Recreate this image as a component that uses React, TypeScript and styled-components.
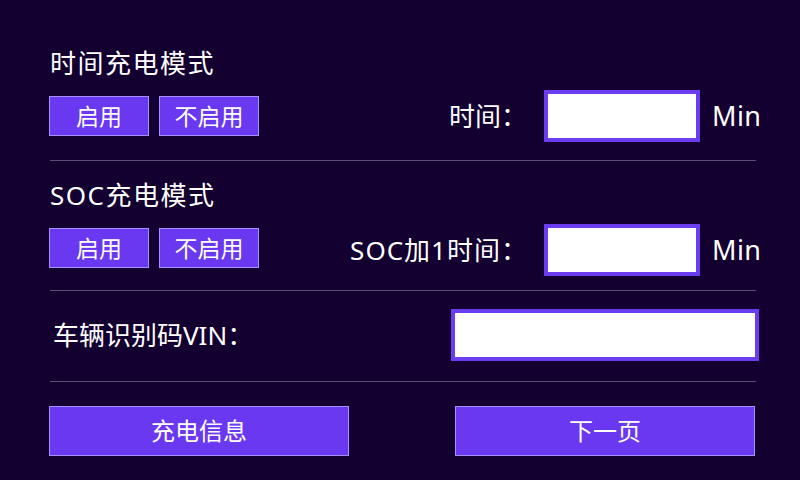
import React from 'react';
import styled, { createGlobalStyle } from 'styled-components';

const GlobalStyle = createGlobalStyle`
  html, body {
    margin: 0;
    padding: 0;
    background: #130030;
  }
  body {
    font-family: 'Noto Sans', 'Noto Sans CJK SC', sans-serif;
    color: #ffffff;
  }
`;

const Screen = styled.main`
  width: 800px;
  height: 480px;
  box-sizing: border-box;
  padding: 0 38px 0 49px;
  background: #130030;
  display: flex;
  flex-direction: column;
  overflow: hidden;
`;

const Section = styled.section<{ $top: number; $bottom: number }>`
  display: flex;
  flex-direction: column;
  padding-top: ${props => props.$top}px;
  padding-bottom: ${props => props.$bottom}px;
`;

const Divider = styled.hr`
  width: 706px;
  height: 1px;
  margin: 0 0 0 1px;
  border: none;
  background: #5e4c78;
`;

const Title = styled.h2<{ $gap: number }>`
  margin: 0 0 ${props => props.$gap}px 1px;
  font-size: 26px;
  font-weight: 400;
  line-height: 30px;
  letter-spacing: 1.5px;
`;

const Row = styled.div`
  display: flex;
  align-items: center;
  justify-content: space-between;
  height: 52px;
`;

const Toggles = styled.div<{ $shift: number }>`
  display: flex;
  gap: 10px;
  margin-top: ${props => props.$shift}px;
`;

const Button = styled.button<{ $wide?: boolean }>`
  box-sizing: border-box;
  width: ${props => (props.$wide ? 300 : 100)}px;
  height: ${props => (props.$wide ? 50 : 40)}px;
  padding: 0;
  border: 1px solid #a391ff;
  background: #6a38f0;
  color: #ffffff;
  font-family: inherit;
  font-size: ${props => (props.$wide ? 24 : 23)}px;
  line-height: 1;
  cursor: pointer;
`;

const Field = styled.div`
  display: flex;
  align-items: center;
`;

const Label = styled.span<{ $indent?: number; $spacing?: number }>`
  font-size: 26px;
  line-height: 30px;
  margin-left: ${props => props.$indent || 0}px;
  letter-spacing: ${props => props.$spacing || 0}px;
`;

const Input = styled.input<{ $width: number }>`
  box-sizing: border-box;
  width: ${props => props.$width}px;
  height: 52px;
  margin: 0;
  border: 4px solid #6b3cf0;
  background: #ffffff;
  outline: none;
`;

const Unit = styled.span`
  width: 50px;
  margin-left: 12px;
  font-size: 27px;
  line-height: 30px;
  letter-spacing: 0.4px;
`;

const Footer = styled.footer`
  display: flex;
  justify-content: space-between;
  width: 706px;
  padding-top: 24px;
`;

export default function App() {
  return (
    <>
      <GlobalStyle />
      <Screen>
        <Section $top={48} $bottom={18}>
          <Title $gap={12}>时间充电模式</Title>
          <Row>
            <Toggles $shift={0}>
              <Button>启用</Button>
              <Button>不启用</Button>
            </Toggles>
            <Field>
              <Label>时间：</Label>
              <Input $width={156} style={{ marginLeft: 17 }} />
              <Unit>Min</Unit>
            </Field>
          </Row>
        </Section>
        <Divider />
        <Section $top={19} $bottom={14}>
          <Title $gap={14}>SOC充电模式</Title>
          <Row>
            <Toggles $shift={-4}>
              <Button>启用</Button>
              <Button>不启用</Button>
            </Toggles>
            <Field>
              <Label $spacing={1}>SOC加1时间：</Label>
              <Input $width={156} style={{ marginLeft: 16 }} />
              <Unit>Min</Unit>
            </Field>
          </Row>
        </Section>
        <Divider />
        <Section $top={18} $bottom={20}>
          <Row>
            <Label $indent={4}>车辆识别码VIN：</Label>
            <Input $width={308} style={{ marginRight: 3 }} />
          </Row>
        </Section>
        <Divider />
        <Footer>
          <Button $wide>充电信息</Button>
          <Button $wide>下一页</Button>
        </Footer>
      </Screen>
    </>
  );
}
